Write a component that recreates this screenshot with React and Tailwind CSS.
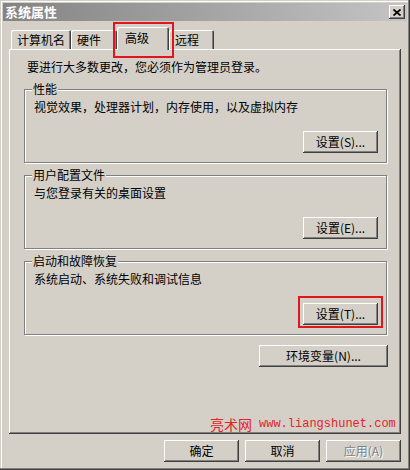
import React from "react";

// classic 3D bevels
const raised = "shadow-[inset_-1px_-1px_#404040,inset_1px_1px_#fff,inset_-2px_-2px_#808080]";

const Btn = ({ children, className = "", disabled }) => (
  <button
    className={`h-[22px] flex items-center justify-center bg-[#d4d0c8] text-[12px] leading-[16px] ${raised} ${
      disabled ? "text-[#808080] [text-shadow:1px_1px_#fff]" : "text-black"
    } ${className}`}
  >
    {children}
  </button>
);

const Tab = ({ label, className, active }) => (
  <div
    className={`relative bg-[#d4d0c8] rounded-t-[2px] text-[12px] leading-[16px] shadow-[inset_1px_1px_#fff,inset_-1px_0_#404040,inset_-2px_0_#808080] ${
      active ? "h-[23px] -mb-[1px] z-10 pt-[3px]" : "h-[19px] pt-[2px]"
    } ${className}`}
  >
    {label}
  </div>
);

const Group = ({ title, desc, btn, className = "" }) => (
  <div
    className={`relative w-[363px] border border-[#808080] shadow-[inset_1px_1px_#fff,1px_1px_#fff] pt-[9px] pb-[9px] pl-[9px] pr-[8px] ${className}`}
  >
    <span className="absolute left-[7px] top-[-8px] px-[1px] bg-[#d4d0c8] leading-[14px]">
      {title}
    </span>
    <p className="leading-[16px]">{desc}</p>
    <div className="flex justify-end mt-[16px]">
      <Btn className="w-[75px]">{btn}</Btn>
    </div>
  </div>
);

export default function App() {
  return (
    <div className="relative w-[410px] h-[470px] bg-[#d4d0c8] pt-[3px] overflow-hidden font-['Noto_Sans_CJK_SC',sans-serif] text-[12px] text-black shadow-[inset_-1px_-1px_#404040,inset_-2px_-2px_#808080,inset_1px_1px_#d4d0c8,inset_2px_2px_#fff]">
      {/* Title bar */}
      <div className="mx-[3px] h-[18px] flex items-center justify-between pl-[2px] pr-[2px] bg-gradient-to-r from-[#848484] to-[#c4c4c4]">
        <span className="text-white font-bold text-[13px] leading-[16px]">系统属性</span>
        <div className={`w-[16px] h-[14px] bg-[#d4d0c8] flex items-center justify-center ${raised}`}>
          <svg width="8" height="7" viewBox="0 0 8 7">
            <path d="M0.5 0.5L7.5 6.5M7.5 0.5L0.5 6.5" stroke="#000" strokeWidth="1.7" />
          </svg>
        </div>
      </div>

      {/* Tabs */}
      <div className="mt-[6px] ml-[11px] flex items-end h-[22px]">
        <Tab label="计算机名" className="w-[60px] pl-[6px]" />
        <Tab label="硬件" className="w-[46px] pl-[6px]" />
        <Tab label="高级" className="w-[52px] pl-[8px]" active />
        <Tab label="远程" className="w-[45px] pl-[6px]" />
      </div>

      {/* Tab page */}
      <div className="ml-[9px] w-[392px] h-[385px] flex flex-col overflow-hidden pt-[10px] shadow-[inset_-1px_-1px_#404040,inset_1px_1px_#fff,inset_-2px_-2px_#808080]">
        <p className="pl-[18px] leading-[16px]">要进行大多数更改，您必须作为管理员登录。</p>

        <div className="ml-[15px] w-[364px] flex flex-col">
          <Group
            className="mt-[14px]"
            title="性能"
            desc="视觉效果，处理器计划，内存使用，以及虚拟内存"
            btn="设置(S)..."
          />
          <Group className="mt-[12px]" title="用户配置文件" desc="与您登录有关的桌面设置" btn="设置(E)..." />
          <Group
            className="mt-[12px]"
            title="启动和故障恢复"
            desc="系统启动、系统失败和调试信息"
            btn="设置(T)..."
          />
          <Btn className="w-[129px] self-end mt-[10px]">环境变量(N)...</Btn>
        </div>

        <div className="mt-auto mb-[2px] ml-[201px] whitespace-nowrap flex items-center leading-[16px] text-[#e3222a]">
          <span className="text-[14px]">亮术网</span>
          <span className="ml-[7px] font-['Liberation_Mono',monospace] text-[12px]">www.liangshunet.com</span>
        </div>
      </div>

      {/* Dialog buttons */}
      <div className="mt-[6px] flex justify-end gap-[6px] pr-[9px]">
        <Btn className="w-[75px] h-[21px]">确定</Btn>
        <Btn className="w-[75px] h-[21px]">取消</Btn>
        <Btn className="w-[75px] h-[21px]" disabled>
          应用(A)
        </Btn>
      </div>

      {/* red annotation frames */}
      <div className="absolute left-[113px] top-[22px] w-[61px] h-[36px] border-2 border-[#e0161e] z-20" />
      <div className="absolute left-[298px] top-[296px] w-[85px] h-[32px] border-2 border-[#e0161e] z-20" />
    </div>
  );
}
